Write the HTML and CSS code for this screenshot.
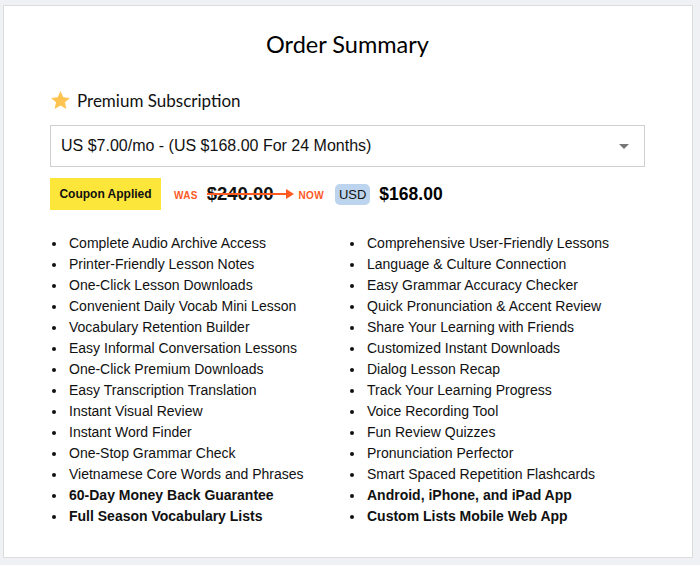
FILE: index.html
```html
<!DOCTYPE html>
<html>
<head>
<meta charset="utf-8">
<link rel="stylesheet" href="styles.css">
</head>
<body>
<div class="card">
  <h1 class="title">Order Summary</h1>
  <div class="plan">
    <svg class="star" viewBox="0 0 24 24" width="21" height="21"><path d="M12 1.2l3.2 7 7.6.8-5.7 5.1 1.6 7.5L12 17.8l-6.7 3.8 1.6-7.5L1.2 9l7.6-.8z" fill="#fdc452"/></svg>
    <span>Premium Subscription</span>
  </div>
  <div class="select">
    <span>US $7.00/mo - (US $168.00 For 24 Months)</span>
    <span class="caret"></span>
  </div>
  <div class="price-row">
    <div class="coupon">Coupon Applied</div>
    <span class="label">WAS</span>
    <span class="old">$240.00<span class="arrow"></span></span>
    <span class="label now">NOW</span>
    <span class="usd">USD</span>
    <span class="new">$168.00</span>
  </div>
  <div class="features">
    <ul class="col">
      <li>Complete Audio Archive Access</li>
      <li>Printer-Friendly Lesson Notes</li>
      <li>One-Click Lesson Downloads</li>
      <li>Convenient Daily Vocab Mini Lesson</li>
      <li>Vocabulary Retention Builder</li>
      <li>Easy Informal Conversation Lessons</li>
      <li>One-Click Premium Downloads</li>
      <li>Easy Transcription Translation</li>
      <li>Instant Visual Review</li>
      <li>Instant Word Finder</li>
      <li>One-Stop Grammar Check</li>
      <li>Vietnamese Core Words and Phrases</li>
      <li class="b">60-Day Money Back Guarantee</li>
      <li class="b">Full Season Vocabulary Lists</li>
    </ul>
    <ul class="col">
      <li>Comprehensive User-Friendly Lessons</li>
      <li>Language &amp; Culture Connection</li>
      <li>Easy Grammar Accuracy Checker</li>
      <li>Quick Pronunciation &amp; Accent Review</li>
      <li>Share Your Learning with Friends</li>
      <li>Customized Instant Downloads</li>
      <li>Dialog Lesson Recap</li>
      <li>Track Your Learning Progress</li>
      <li>Voice Recording Tool</li>
      <li>Fun Review Quizzes</li>
      <li>Pronunciation Perfector</li>
      <li>Smart Spaced Repetition Flashcards</li>
      <li class="b">Android, iPhone, and iPad App</li>
      <li class="b">Custom Lists Mobile Web App</li>
    </ul>
  </div>
</div>
</body>
</html>
```

FILE: styles.css
```css
html, body {
  margin: 0;
  padding: 0;
  background: #f0f1f5;
}
body {
  padding: 5px 7px 7px 3px;
  font-family: "Liberation Sans", Arial, sans-serif;
  color: #111;
}
.card {
  background: #fff;
  border: 1px solid #dcdcdc;
  height: 553px;
  box-sizing: border-box;
  padding: 0 47px 0 46px;
}
.title {
  margin: 0;
  padding-top: 23px;
  height: 40px;
  text-align: center;
  font-family: Lato, "Noto Sans", sans-serif;
  font-weight: 400;
  font-size: 23.5px;
  line-height: 30px;
  color: #000;
}
.plan {
  display: flex;
  align-items: center;
  margin-top: 19px;
  height: 24px;
  font-family: Lato, "Noto Sans", sans-serif;
  font-size: 17px;
  color: #111;
}
.star {
  margin-left: 0;
  margin-right: 6px;
}
.select {
  margin-top: 13px;
  height: 42px;
  box-sizing: border-box;
  border: 1px solid #d0d0d0;
  display: flex;
  align-items: center;
  justify-content: space-between;
  padding: 0 15px 0 10px;
  font-size: 16px;
  color: #111;
}
.caret {
  width: 0;
  height: 0;
  border-left: 5px solid transparent;
  border-right: 5px solid transparent;
  border-top: 5px solid #777;
}
.price-row {
  display: flex;
  align-items: center;
  margin-top: 11px;
  height: 32px;
}
.coupon {
  background: #fde63a;
  height: 32px;
  width: 111px;
  display: flex;
  align-items: center;
  justify-content: center;
  font-size: 12px;
  font-weight: 700;
  color: #111;
}
.label {
  margin-left: 13px;
  color: #ff5a1f;
  font-weight: 700;
  font-size: 10px;
  letter-spacing: 0.3px;
  padding-top: 2px;
}
.label.now {
  margin-left: 25px;
}
.old {
  position: relative;
  margin-left: 9px;
  font-size: 18.5px;
  font-weight: 700;
  color: #111;
}
.arrow {
  position: absolute;
  left: 0;
  top: 10px;
  width: 80px;
  height: 2px;
  background: #ff5a1f;
}
.arrow::after {
  content: "";
  position: absolute;
  right: -7px;
  top: -4px;
  border-top: 5px solid transparent;
  border-bottom: 5px solid transparent;
  border-left: 8px solid #ff5a1f;
}
.usd {
  margin-left: 11px;
  background: #bdd4ee;
  border-radius: 5px;
  padding: 3px 4px;
  font-size: 13px;
  color: #111;
}
.new {
  margin-left: 9px;
  font-size: 17.5px;
  font-weight: 700;
  color: #000;
}
.features {
  display: grid;
  grid-template-columns: 298px 1fr;
  margin-top: 23px;
}
.col {
  list-style: none;
  margin: 0;
  padding: 0;
}
.col li {
  position: relative;
  padding-left: 19px;
  font-size: 14px;
  line-height: 21px;
  color: #111;
}
.col li::before {
  content: "";
  position: absolute;
  left: 2px;
  top: 9px;
  width: 4px;
  height: 4px;
  border-radius: 50%;
  background: #111;
}
.col li.b {
  font-weight: 700;
}
```
